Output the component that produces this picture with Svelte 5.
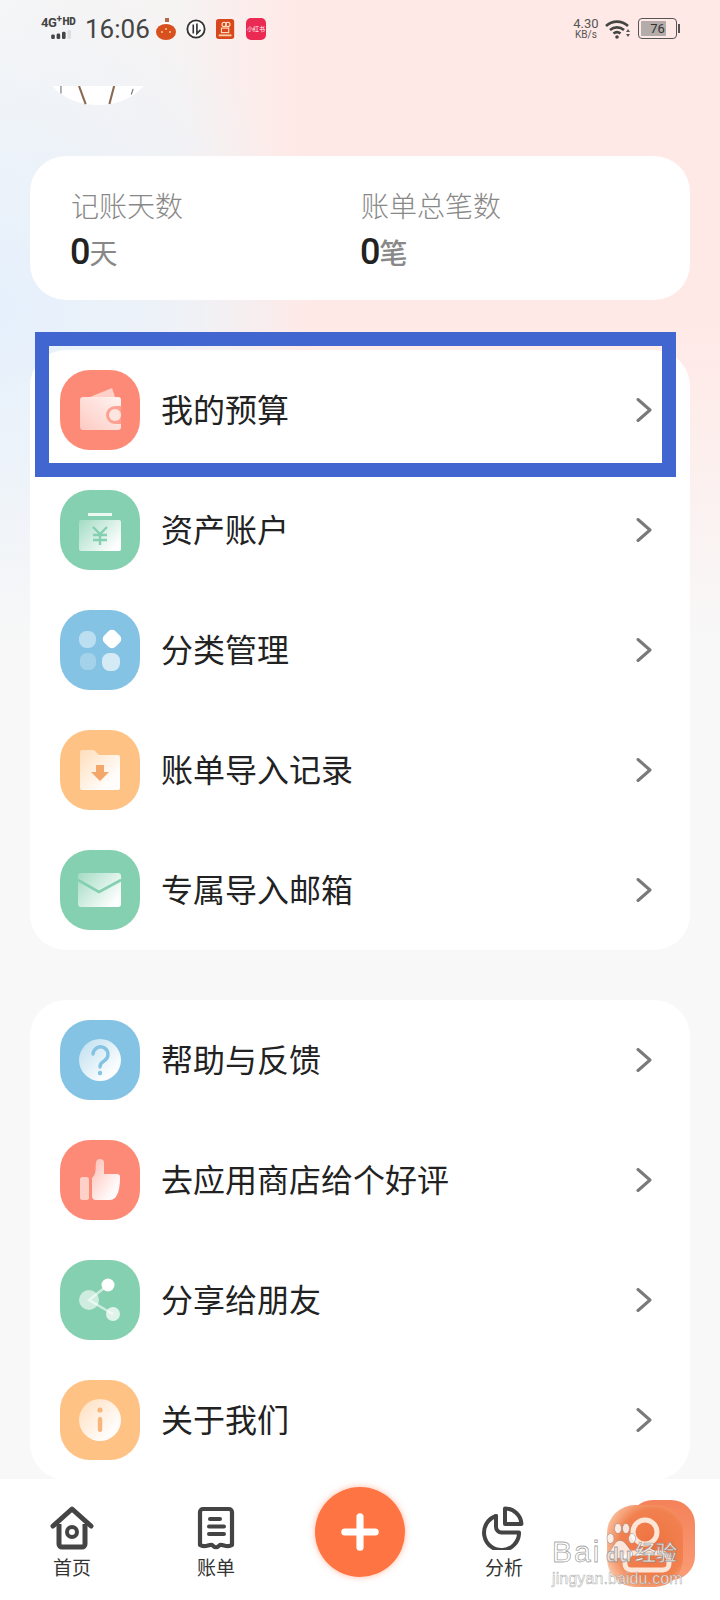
<script lang="ts">
	interface MenuItem {
		icon: string;
		color: string;
		label: string;
	}

	const red = '#fd8a77';
	const green = '#84d0b0';
	const blue = '#84c3e3';
	const orange = '#fec285';

	const mainMenu: MenuItem[] = [
		{ icon: 'wallet', color: red, label: '我的预算' },
		{ icon: 'asset', color: green, label: '资产账户' },
		{ icon: 'category', color: blue, label: '分类管理' },
		{ icon: 'folder', color: orange, label: '账单导入记录' },
		{ icon: 'mail', color: green, label: '专属导入邮箱' }
	];

	const otherMenu: MenuItem[] = [
		{ icon: 'help', color: blue, label: '帮助与反馈' },
		{ icon: 'thumb', color: red, label: '去应用商店给个好评' },
		{ icon: 'share', color: green, label: '分享给朋友' },
		{ icon: 'info', color: orange, label: '关于我们' }
	];
</script>

{#snippet glyph(name: string, color: string)}
	<svg class="glyph" viewBox="0 0 80 80" aria-hidden="true">
		{#if name === 'wallet'}
			<path d="M30 27 L52 18 L55 27 Z" fill="#fff" opacity="0.6" />
			<path d="M23 27 H58 a3 3 0 0 1 3 3 V57 a3 3 0 0 1 -3 3 H23 a3 3 0 0 1 -3 -3 V30 a3 3 0 0 1 3 -3 Z" fill="url(#fadeUp)" />
			<path d="M62 36 H55 a9 9 0 0 0 0 18 H62 Z" fill={color} opacity="0.75" />
			<circle cx="55" cy="45" r="6" fill="#fde6e0" />
		{:else if name === 'asset'}
			<rect x="28" y="23" width="24" height="3" fill="#fff" opacity="0.85" />
			<rect x="19" y="30" width="42" height="31" rx="2" fill="url(#fadeRight)" />
			<path d="M33 37 L40 44 L47 37 M40 44 V55 M33 45 H47 M33 50 H47" fill="none" stroke={color} stroke-width="2.4" />
		{:else if name === 'category'}
			<rect x="19" y="21" width="17" height="17" rx="7.500" fill="#fff" opacity="0.45" />
			<rect x="44" y="21" width="16" height="16" rx="5" fill="#fff" transform="rotate(45 52 29)" />
			<rect x="20" y="43" width="16" height="17" rx="6.500" fill="#fff" opacity="0.25" />
			<rect x="42" y="43" width="18" height="18" rx="7.500" fill="#fff" opacity="0.65" />
		{:else if name === 'folder'}
			<path d="M22 20 H33 a3 3 0 0 1 2 1 L39 25 H58 a2 2 0 0 1 2 2 V58 a2 2 0 0 1 -2 2 H22 a2 2 0 0 1 -2 -2 V22 a2 2 0 0 1 2 -2 Z" fill="url(#fadeDiag)" />
			<path d="M36 35 H44 V42 H49 L40 51 L31 42 H36 Z" fill="#f4a76a" />
		{:else if name === 'mail'}
			<rect x="18" y="23" width="43" height="34" rx="3" fill="url(#fadeRight)" />
			<path d="M18 30 L39 42 L61 30" fill="none" stroke={color} stroke-width="2.6" />
		{:else if name === 'help'}
			<circle cx="40" cy="40" r="21" fill="url(#fadeDiag)" />
			<path d="M33 34 a7.5 7.500 0 1 1 11 7 c-3 1.6 -4 3 -4 6" fill="none" stroke={color} stroke-width="3.4" stroke-linecap="round" />
			<circle cx="40" cy="53" r="2.2" fill={color} />
		{:else if name === 'thumb'}
			<rect x="20" y="37" width="9" height="23" rx="2.5" fill="#fff" opacity="0.6" />
			<path d="M32 38 C37 34 35 27 36 23 a4 4 0 0 1 8 0 V34 H57 a3 3 0 0 1 3 3 C60 48 58 60 50 60 H36 a4 4 0 0 1 -4 -4 Z" fill="url(#fadeDiag)" />
		{:else if name === 'share'}
			<path d="M48 25 L29 40 L53 54" fill="none" stroke="#fff" stroke-opacity="0.6" stroke-width="2.4" />
			<circle cx="48" cy="25" r="6.5" fill="#fff" />
			<circle cx="29" cy="40" r="10" fill="#fff" opacity="0.6" />
			<circle cx="53" cy="54" r="7" fill="#fff" opacity="0.75" />
		{:else if name === 'info'}
			<circle cx="40" cy="40" r="21" fill="url(#fadeDiag)" />
			<circle cx="40" cy="30" r="2.6" fill="#f6b67c" />
			<rect x="37.8" y="37" width="4.4" height="15" rx="2" fill="#f6b67c" />
		{/if}
	</svg>
{/snippet}

{#snippet row(item: MenuItem)}
	<div class="row">
		<div class="badge" style="background: {item.color}">
			{@render glyph(item.icon, item.color)}
		</div>
		<span class="label">{item.label}</span>
		<svg class="chevron" viewBox="0 0 16 24" aria-hidden="true">
			<path d="M2 1.5 L14 12 L2 22.5" fill="none" stroke="#7a7a7a" stroke-width="3" stroke-linecap="round" stroke-linejoin="round" />
		</svg>
	</div>
{/snippet}

<svg class="defs" aria-hidden="true">
	<defs>
		<linearGradient id="fadeUp" x1="1" y1="0" x2="0" y2="1">
			<stop offset="0" stop-color="#fff" stop-opacity="0.9" />
			<stop offset="1" stop-color="#fff" stop-opacity="0.55" />
		</linearGradient>
		<linearGradient id="fadeRight" x1="0" y1="0" x2="1" y2="0.7">
			<stop offset="0" stop-color="#fff" stop-opacity="0.25" />
			<stop offset="1" stop-color="#fff" stop-opacity="1" />
		</linearGradient>
		<linearGradient id="fadeDiag" x1="0" y1="0" x2="1" y2="1">
			<stop offset="0" stop-color="#fff" stop-opacity="0.45" />
			<stop offset="0.75" stop-color="#fff" stop-opacity="0.95" />
			<stop offset="1" stop-color="#fff" stop-opacity="1" />
		</linearGradient>
		<linearGradient id="mineBack" x1="0" y1="0" x2="0" y2="1">
			<stop offset="0" stop-color="#f4825a" />
			<stop offset="1" stop-color="#fb9c76" />
		</linearGradient>
		<radialGradient id="mineFront" cx="0.6" cy="0.48" r="0.72">
			<stop offset="0" stop-color="#ee7240" />
			<stop offset="0.6" stop-color="#f1814f" />
			<stop offset="0.85" stop-color="#f8b692" />
			<stop offset="1" stop-color="#fde6d6" />
		</radialGradient>
	</defs>
</svg>

<div class="page">
	<header class="status">
		<div class="net">
			<span class="net-text">4G<sup>+</sup><b>HD</b></span>
			<svg class="bars" viewBox="0 0 24 10" aria-hidden="true">
				<rect x="0" y="5" width="4" height="5" rx="1.5" fill="#444" />
				<rect x="6" y="4" width="4" height="6" rx="1.5" fill="#444" />
				<rect x="12" y="2" width="4" height="8" rx="1.5" fill="#444" />
				<rect x="18" y="0" width="4" height="10" rx="1.5" fill="#ddd" />
			</svg>
		</div>
		<span class="time">16:06</span>
		<svg class="app" viewBox="0 0 20 22" aria-hidden="true">
			<rect x="9" y="0" width="4" height="4" fill="#b06a4a" />
			<path d="M3 7 a8 5 0 0 1 14 0 Z" fill="#fff" />
			<ellipse cx="10" cy="14" rx="10" ry="8" fill="#d9501f" />
			<circle cx="6" cy="14" r="1" fill="#ffc48a" /><circle cx="10" cy="11" r="1" fill="#ffc48a" /><circle cx="14" cy="14" r="1" fill="#ffc48a" />
		</svg>
		<svg class="app" viewBox="0 0 22 22" aria-hidden="true">
			<circle cx="11" cy="11" r="9.5" fill="#fff" stroke="#333" stroke-width="2" />
			<path d="M8 6 V16 M12 5 V16 L16 12" fill="none" stroke="#333" stroke-width="1.8" />
		</svg>
		<svg class="app" viewBox="0 0 22 22" aria-hidden="true">
			<rect width="20" height="22" rx="3" fill="#d9481c" />
			<circle cx="9" cy="6" r="2.4" fill="none" stroke="#ffe3c8" stroke-width="1.2" />
			<circle cx="13" cy="6" r="2.4" fill="none" stroke="#ffe3c8" stroke-width="1.2" />
			<rect x="6" y="10" width="8" height="5" fill="none" stroke="#ffe3c8" stroke-width="1.2" />
			<rect x="3" y="17" width="14" height="2" fill="#ffd3a8" />
		</svg>
		<span class="red-app">小红书</span>
		<div class="status-right">
			<span class="speed">4.30<br /><small>KB/s</small></span>
			<svg class="wifi" viewBox="0 0 26 20" aria-hidden="true">
				<path d="M1 7 a16 16 0 0 1 22 0 M5 11 a10.5 10.500 0 0 1 14 0 M8.5 14.5 a5.5 5.500 0 0 1 7 0" fill="none" stroke="#444" stroke-width="2.6" />
				<circle cx="12" cy="18" r="1.8" fill="#444" />
				<path d="M23 10 l2 3 h-4 Z M21 15 h4 l-2 3 Z" fill="#555" />
			</svg>
			<div class="battery">
				<div class="battery-box">
					<div class="battery-level" style="width: 76%"></div>
					<span>76</span>
				</div>
				<i></i>
			</div>
		</div>
	</header>

	<div class="avatar-wrap">
		<svg class="avatar" viewBox="0 0 96 20" aria-hidden="true">
			<path d="M0 0 H96 C84 14 66 20 48 20 C30 20 12 14 0 0 Z" fill="#fff" />
			<path d="M28 0 L35 19 M65 0 L60 19" fill="none" stroke="#8a6a52" stroke-width="2.2" />
			<path d="M9 0 V8 M85 3 L83 9" fill="none" stroke="#777" stroke-width="1.2" />
		</svg>
	</div>

	<section class="stats">
		<div class="stat">
			<span class="stat-name">记账天数</span>
			<span class="stat-value"><b>0</b>天</span>
		</div>
		<div class="stat">
			<span class="stat-name">账单总笔数</span>
			<span class="stat-value strong"><b>0</b>笔</span>
		</div>
	</section>

	<section class="card first">
		{#each mainMenu as item}
			{@render row(item)}
		{/each}
		<div class="highlight"></div>
	</section>

	<section class="card second">
		{#each otherMenu as item}
			{@render row(item)}
		{/each}
	</section>

	<nav class="tabs">
		<div class="tab">
			<svg class="tab-icon" viewBox="0 0 44 44" aria-hidden="true">
				<path d="M3 20 L22 3 L41 20" fill="none" stroke="#444" stroke-width="5" stroke-linecap="round" stroke-linejoin="round" />
				<path d="M9 18 V38 a3 3 0 0 0 3 3 H32 a3 3 0 0 0 3 -3 V18" fill="none" stroke="#444" stroke-width="5" />
				<circle cx="22" cy="26" r="5" fill="none" stroke="#444" stroke-width="4" />
			</svg>
			<span>首页</span>
		</div>
		<div class="tab">
			<svg class="tab-icon" viewBox="0 0 44 44" aria-hidden="true">
				<path d="M6 39 V6 a3 3 0 0 1 3 -3 H35 a3 3 0 0 1 3 3 V39 C33 42 29 38 26 39 C23 42 21 42 18 39 C15 38 11 42 6 39 Z" fill="none" stroke="#444" stroke-width="4.2" stroke-linejoin="round" />
				<path d="M16 13 H26 M15 20.500 H30 M15 28 H30" fill="none" stroke="#444" stroke-width="4" stroke-linecap="round" />
			</svg>
			<span>账单</span>
		</div>
		<div class="tab fab-slot"></div>
		<div class="tab">
			<svg class="tab-icon" viewBox="0 0 44 44" aria-hidden="true">
				<path d="M14 10 A17.500 17.500 0 1 0 37 28" fill="none" stroke="#444" stroke-width="4" stroke-linecap="round" />
				<path d="M14 10 V21 a5.500 5.500 0 0 0 5.500 5.500 H37" fill="none" stroke="#444" stroke-width="4" stroke-linecap="round" />
				<path d="M23 2.500 A16.500 16.500 0 0 1 39.500 18 H23 Z" fill="none" stroke="#444" stroke-width="4" stroke-linejoin="round" />
			</svg>
			<span>分析</span>
		</div>
		<div class="tab"></div>

		<div class="fab">
			<svg viewBox="0 0 40 40" aria-hidden="true">
				<path d="M20 4 V36 M4 20 H36" fill="none" stroke="#fff" stroke-width="7.500" stroke-linecap="round" />
			</svg>
		</div>

		<svg class="mine" viewBox="0 0 92 90" aria-hidden="true">
			<rect x="24" y="0" width="66" height="80" rx="24" fill="url(#mineBack)" />
			<rect x="2" y="5" width="76" height="82" rx="28" fill="url(#mineFront)" />
			<circle cx="40" cy="32" r="12" fill="none" stroke="#fde6d8" stroke-width="5" />
			<path d="M20 62 a8 8 0 0 1 8 -9 H56 a8 8 0 0 1 8 9 V64 a6 6 0 0 1 -6 6 H26 a6 6 0 0 1 -6 -6 Z" fill="none" stroke="#fde6d8" stroke-width="5" />
		</svg>

		<div class="watermark">
			<div class="wm-top">
				<span class="wm-bai">Bai</span>
				<svg class="paw" viewBox="0 0 60 74" aria-hidden="true">
					<ellipse cx="9" cy="30" rx="7" ry="10" />
					<ellipse cx="24" cy="10" rx="7" ry="10" />
					<ellipse cx="40" cy="10" rx="7" ry="10" />
					<ellipse cx="52" cy="30" rx="7" ry="10" />
					<path d="M28 34 C38 34 42 46 50 54 C58 64 48 74 38 71 C32 69 24 69 18 71 C6 74 0 62 8 54 C16 46 18 34 28 34 Z" />
				</svg>
				<span class="wm-du">du</span>
				<span class="wm-jy">经验</span>
			</div>
			<span class="wm-url">jingyan.baidu.com</span>
		</div>
	</nav>
</div>

<style>
	:global(body) {
		margin: 0;
	}

	.defs {
		position: absolute;
		width: 0;
		height: 0;
	}

	.page {
		position: relative;
		width: 720px;
		height: 1600px;
		overflow: hidden;
		display: flex;
		flex-direction: column;
		font-family: "Noto Sans CJK SC", "Liberation Sans", sans-serif;
		color: #222;
		background:
			radial-gradient(ellipse 320px 340px at 0 310px, #e5f0fc 0%, rgba(229, 240, 252, 0) 100%),
			linear-gradient(180deg, rgba(247, 247, 247, 0) 0, rgba(247, 247, 247, 0) 320px, #f8f8f8 640px),
			linear-gradient(90deg, #f6f6f6 0, #f6f3f3 180px, #ffe9e6 300px, #ffe9e6 100%);
	}

	/* status bar */
	.status {
		height: 58px;
		padding: 16px 0 0 41px;
		box-sizing: border-box;
		display: flex;
		align-items: flex-start;
		flex: none;
	}

	.net {
		width: 38px;
		display: flex;
		flex-direction: column;
		align-items: flex-start;
		font-family: "Roboto", sans-serif;
		color: #444;
	}

	.net-text {
		font-size: 13px;
		line-height: 12px;
		font-weight: 700;
		white-space: nowrap;
		letter-spacing: -0.4px;
	}

	.net-text sup {
		font-size: 10px;
		line-height: 0;
	}

	.net-text b {
		font-size: 10px;
		vertical-align: 2px;
		margin-left: 1px;
	}

	.bars {
		width: 24px;
		height: 9px;
		margin: 1px 0 0 9px;
	}

	.time {
		margin-left: 6px;
		font-family: "Roboto", sans-serif;
		font-size: 26px;
		line-height: 26px;
		color: #444;
		margin-right: 8px;
		width: 63px;
		white-space: nowrap;
	}

	.app {
		width: 20px;
		height: 22px;
		margin: 2px 10px 0 0;
		flex: none;
	}

	.red-app {
		width: 20px;
		height: 22px;
		margin: 2px 0 0 0;
		border-radius: 5px;
		background: #ea2a52;
		color: #fff;
		font-size: 6px;
		line-height: 22px;
		text-align: center;
		white-space: nowrap;
		overflow: hidden;
	}

	.status-right {
		margin-left: auto;
		margin-right: 40px;
		display: flex;
		align-items: flex-start;
	}

	.speed {
		width: 28px;
		font-family: "Roboto", sans-serif;
		font-size: 13px;
		line-height: 10px;
		color: #555;
		text-align: center;
		padding-top: 3px;
	}

	.speed small {
		font-size: 10px;
	}

	.wifi {
		width: 26px;
		height: 20px;
		margin: 3px 7px 0 5px;
	}

	.battery {
		display: flex;
		align-items: center;
		padding-top: 2px;
	}

	.battery-box {
		position: relative;
		width: 33px;
		height: 15px;
		border: 1.5px solid #555;
		border-radius: 4px;
		padding: 2px;
		box-sizing: content-box;
	}

	.battery-level {
		height: 100%;
		background: #b3acaa;
		border-radius: 1px;
	}

	.battery-box span {
		position: absolute;
		inset: 0;
		text-align: center;
		font-family: "Roboto", sans-serif;
		font-size: 13px;
		line-height: 19px;
		color: #333;
	}

	.battery i {
		width: 2px;
		height: 9px;
		background: #555;
		margin-left: 1px;
	}

	/* avatar sliver */
	.avatar-wrap {
		height: 47px;
		flex: none;
		padding: 28px 0 0 50px;
		box-sizing: border-box;
	}

	.avatar {
		display: block;
		width: 96px;
		height: 19px;
	}

	/* stats */
	.stats {
		flex: none;
		height: 144px;
		margin: 51px 30px 0;
		padding: 29px 0 0 41px;
		box-sizing: border-box;
		background: #fff;
		border-radius: 36px;
		display: grid;
		grid-template-columns: 290px 1fr;
	}

	.stat {
		display: flex;
		flex-direction: column;
	}

	.stat-name {
		font-size: 28px;
		line-height: 40px;
		font-weight: 300;
		color: #888;
	}

	.stat-value {
		margin-top: 5px;
		font-size: 28px;
		line-height: 44px;
		color: #888;
		font-weight: 400;
	}

	.stat-value.strong {
		font-weight: 500;
	}

	.stat-value b {
		font-family: "Roboto", "Liberation Sans", sans-serif;
		font-size: 36px;
		font-weight: 500;
		color: #222;
		letter-spacing: -1px;
		margin-left: -1px;
	}

	/* menu cards */
	.card {
		position: relative;
		flex: none;
		margin: 0 30px;
		background: #fff;
		border-radius: 36px;
	}

	.card.first {
		margin-top: 50px;
	}

	.card.second {
		margin-top: 50px;
	}

	.row {
		height: 120px;
		padding: 0 38px 0 30px;
		display: flex;
		align-items: center;
	}

	.badge {
		width: 80px;
		height: 80px;
		border-radius: 30px;
		flex: none;
	}

	.glyph {
		display: block;
		width: 80px;
		height: 80px;
	}

	.label {
		margin: 0 0 4px 21px;
		font-size: 32px;
		line-height: 44px;
		color: #222;
		white-space: nowrap;
	}

	.chevron {
		width: 16px;
		height: 24px;
		margin-left: auto;
	}

	/* annotation box drawn over the first row */
	.highlight {
		position: absolute;
		left: 5px;
		top: -18px;
		width: 641px;
		height: 145px;
		border: 14px solid #4266cf;
		box-sizing: border-box;
		pointer-events: none;
	}

	/* tab bar */
	.tabs {
		position: absolute;
		left: 0;
		right: 0;
		bottom: 0;
		height: 121px;
		background: #fff;
		display: grid;
		grid-template-columns: 144px 144px 144px 144px 144px;
	}

	.tab {
		display: flex;
		flex-direction: column;
		align-items: center;
		padding-top: 27px;
		box-sizing: border-box;
		font-size: 19px;
		line-height: 28px;
		color: #333;
	}

	.tab-icon {
		width: 44px;
		height: 44px;
		margin-bottom: 3px;
	}

	.fab {
		position: absolute;
		left: 315px;
		top: 8px;
		width: 90px;
		height: 90px;
		border-radius: 50%;
		background: #ff7443;
		box-shadow: 0 0 6px rgba(255, 116, 67, 0.5);
		display: flex;
		align-items: center;
		justify-content: center;
	}

	.fab svg {
		width: 38px;
		height: 38px;
	}

	.mine {
		position: absolute;
		left: 605px;
		top: 21px;
		width: 92px;
		height: 90px;
	}

	.watermark {
		position: absolute;
		left: 552px;
		top: 30px;
		width: 140px;
		color: #fff;
		font-family: "Liberation Sans", sans-serif;
		pointer-events: none;
	}

	.wm-top {
		position: relative;
		height: 61px;
	}

	.wm-bai,
	.wm-du,
	.wm-jy {
		position: absolute;
		-webkit-text-stroke: 0.8px rgba(130, 130, 130, 0.7);
		color: rgba(255, 255, 255, 0.85);
	}

	.wm-bai {
		left: 0;
		top: 28px;
		font-size: 30px;
		line-height: 30px;
		font-weight: 400;
		letter-spacing: 2px;
	}

	.paw {
		position: absolute;
		left: 54px;
		top: 13px;
		width: 30px;
		height: 40px;
		fill: rgba(255, 255, 255, 0.8);
		stroke: rgba(130, 130, 130, 0.7);
		stroke-width: 1.4;
	}

	.wm-du {
		left: 54px;
		top: 34px;
		font-size: 21px;
		line-height: 24px;
		font-weight: 700;
		color: rgba(235, 225, 220, 0.9);
	}

	.wm-jy {
		left: 83px;
		top: 27px;
		font-family: "Noto Sans CJK SC", sans-serif;
		font-size: 21px;
		line-height: 30px;
		font-weight: 500;
	}

	.wm-url {
		display: block;
		font-size: 16px;
		line-height: 18px;
		letter-spacing: 0.1px;
		white-space: nowrap;
		color: rgba(255, 255, 255, 0.85);
		-webkit-text-stroke: 0.5px rgba(130, 130, 130, 0.7);
	}
</style>
